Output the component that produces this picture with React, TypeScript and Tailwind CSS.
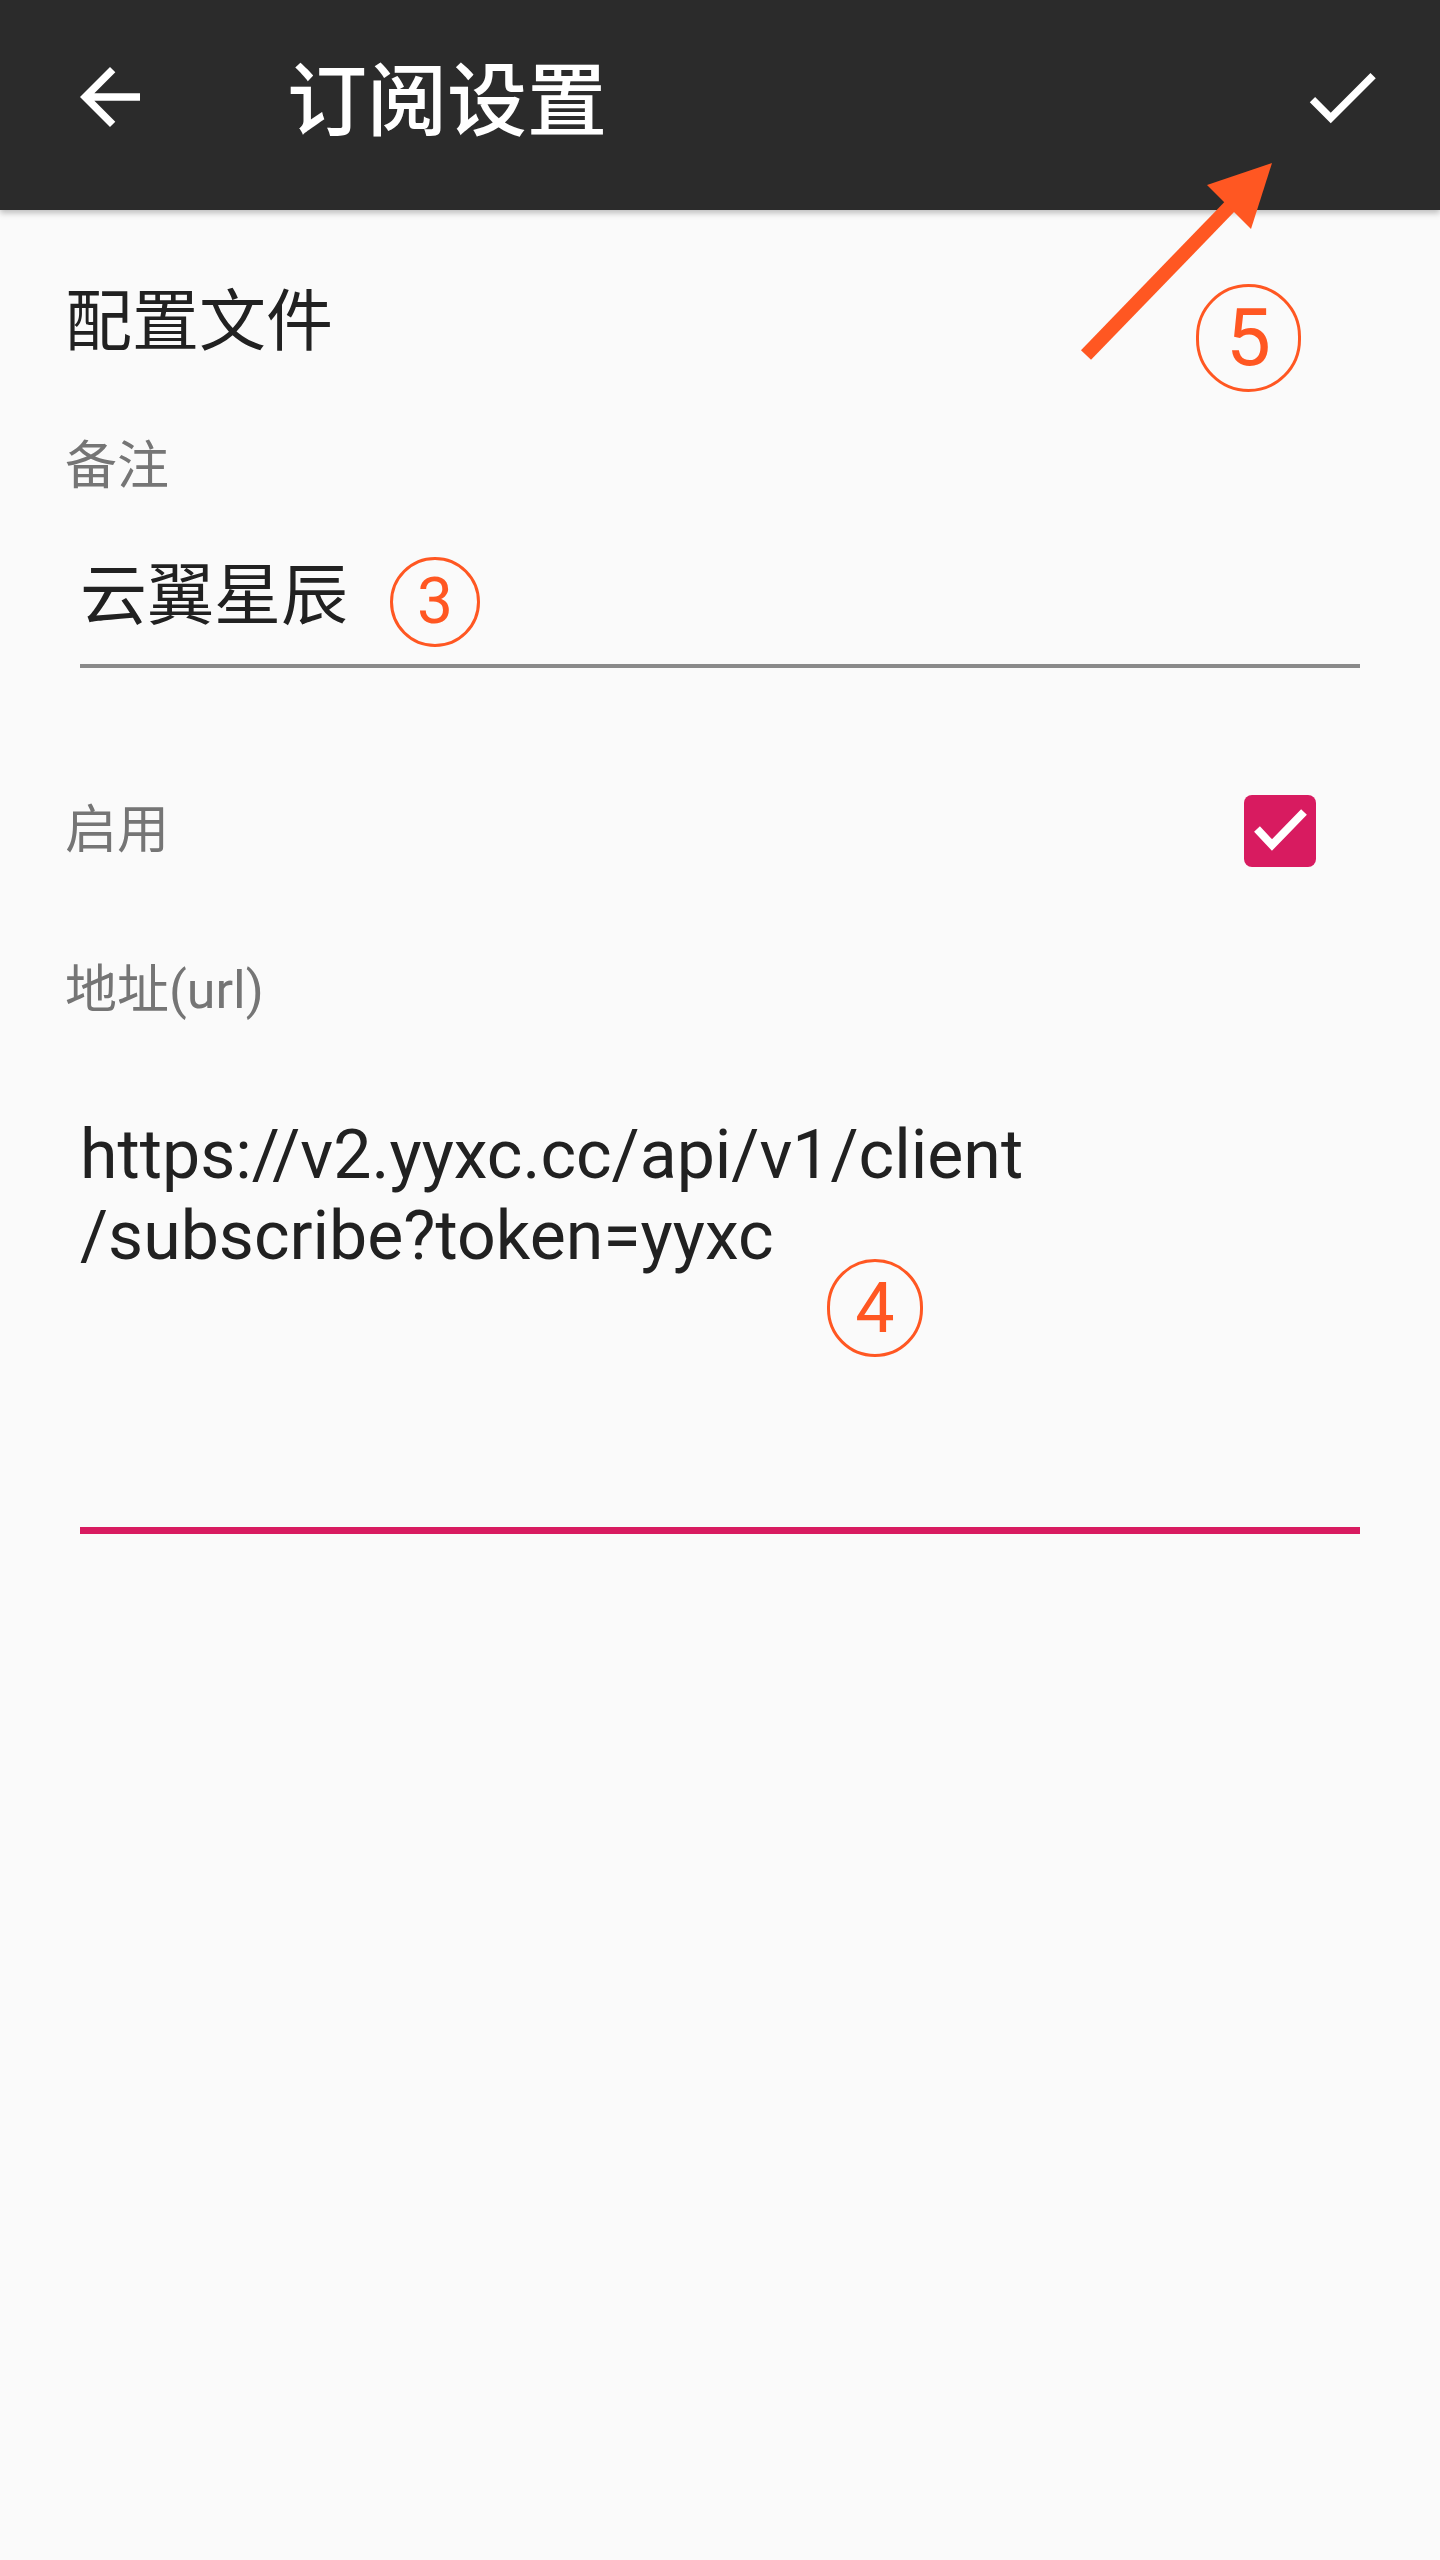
import React from 'react'

const FONT = "font-['Roboto','Noto_Sans_CJK_SC',sans-serif]"

// circled annotation number, drawn over the screenshot
const Badge: React.FC<{ n: string; className?: string; textClass?: string }> = ({
  n,
  className = '',
  textClass = 'text-[64px]',
}) => (
  <div
    className={`flex items-center justify-center rounded-full border-[3px] border-[#ff5722] text-[#ff5722] ${className}`}
  >
    <span className={`${textClass} leading-none`}>{n}</span>
  </div>
)

const BackIcon = () => (
  <svg viewBox="0 0 24 24" className="w-[90px] h-[90px]" fill="#ffffff">
    <path d="M20 11H7.83l5.59-5.59L12 4l-8 8 8 8 1.41-1.41L7.83 13H20v-2z" />
  </svg>
)

const CheckIcon = () => (
  <svg viewBox="0 0 24 24" className="w-[90px] h-[90px]" fill="#ffffff">
    <path d="M9 16.17L4.83 12l-1.42 1.41L9 19 21 7l-1.41-1.41z" />
  </svg>
)

export default function App() {
  return (
    <div className={`relative min-h-[2560px] w-[1440px] bg-[#fafafa] ${FONT}`}>
      {/* Toolbar */}
      <header className="relative z-10 flex h-[210px] items-start bg-[#2b2b2b] pt-[52px] pl-[65px] pr-[53px] shadow-[0_3px_6px_rgba(0,0,0,0.25)]">
        <BackIcon />
        <h1 className="ml-[132px] mt-[5px] text-[80px] font-medium leading-[90px] text-white">订阅设置</h1>
        <div className="ml-auto">
          <CheckIcon />
        </div>
      </header>

      {/* Form */}
      <main className="px-[65px]">
        <h2 className="mt-[72px] text-[67px] leading-[80px] text-[#212121]">配置文件</h2>

        <div className="mt-[75px] text-[52px] leading-[60px] text-[#757575]">备注</div>
        <div className="mx-[15px] mt-[59px] border-b-[4px] border-[#8a8a8a] pb-[28px]">
          <div className="flex h-[80px] items-center">
            <span className="text-[67px] leading-[80px] text-[#212121]">云翼星辰</span>
            <Badge n="3" className="ml-[42px] mt-[12px] h-[90px] w-[90px]" textClass="text-[64px]" />
          </div>
        </div>

        <div className="mt-[103px] flex h-[120px] items-center justify-between">
          <span className="text-[52px] leading-[60px] text-[#757575]">启用</span>
          <div className="mr-[59px] h-[72px] w-[72px] rounded-[8px] bg-[#d81b60]">
            <svg viewBox="0 0 72 72" className="h-[72px] w-[72px]">
              <polyline points="13,34 28,50 60,17" fill="none" stroke="#ffffff" strokeWidth="8" />
            </svg>
          </div>
        </div>

        <div className="mt-[70px] text-[52px] leading-[60px] text-[#757575]">地址(url)</div>
        <div className="relative mx-[15px] mt-[94px] border-b-[7px] border-[#d81b60] pb-[250px]">
          <p className="text-[68px] leading-[81px] text-[#212121]">
            https://v2.yyxc.cc/api/v1/client
            <br />
            /subscribe?token=yyxc
          </p>
          <Badge
            n="4"
            className="absolute left-[747px] top-[144px] h-[98px] w-[96px]"
            textClass="text-[70px]"
          />
        </div>
      </main>

      {/* Annotation arrow pointing to the save button */}
      <svg
        className="pointer-events-none absolute left-0 top-0 z-20 h-[420px] w-[1440px]"
        viewBox="0 0 1440 420"
      >
        <line x1="1086" y1="355" x2="1236" y2="200" stroke="#ff5722" strokeWidth="14" />
        <polygon points="1207,185 1272,163 1251,229" fill="#ff5722" />
      </svg>
      <Badge
        n="5"
        className="absolute left-[1196px] top-[284px] z-20 h-[108px] w-[105px]"
        textClass="text-[80px]"
      />
    </div>
  )
}
